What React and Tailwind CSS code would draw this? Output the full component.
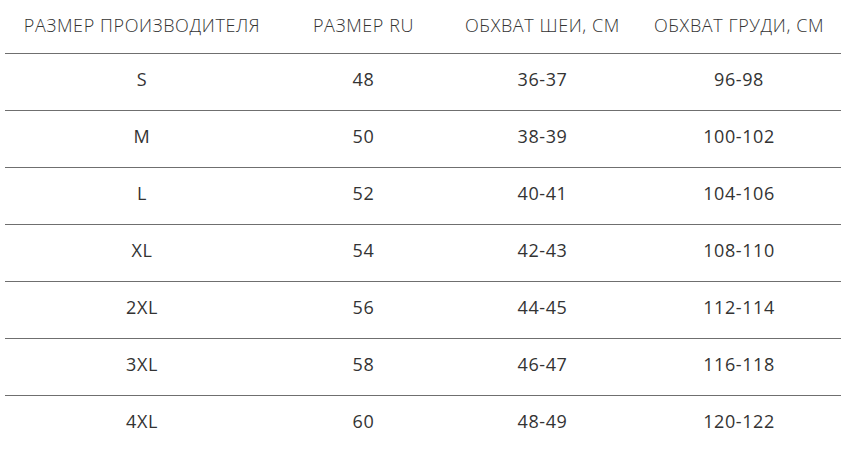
import React from 'react';

const rows = [
  ['S', '48', '36-37', '96-98'],
  ['M', '50', '38-39', '100-102'],
  ['L', '52', '40-41', '104-106'],
  ['XL', '54', '42-43', '108-110'],
  ['2XL', '56', '44-45', '112-114'],
  ['3XL', '58', '46-47', '116-118'],
  ['4XL', '60', '48-49', '120-122'],
];

const App = () => {
  return (
    <div className="min-h-screen bg-white px-[5px]">
      <table className="w-[836px] table-fixed border-collapse text-[#333]">
        <colgroup>
          <col className="w-[274px]" />
          <col className="w-[169px]" />
          <col className="w-[189px]" />
          <col className="w-[204px]" />
        </colgroup>
        <thead>
          <tr className="h-[53px] border-b border-[#6f6f6f] font-['Open_Sans',sans-serif] text-[18px] tracking-[0.6px]">
            <th className="font-light pb-[1px]">РАЗМЕР ПРОИЗВОДИТЕЛЯ</th>
            <th className="font-light pb-[1px]">РАЗМЕР RU</th>
            <th className="font-light pb-[1px]">ОБХВАТ ШЕИ, СМ</th>
            <th className="font-light pb-[1px]">ОБХВАТ ГРУДИ, СМ</th>
          </tr>
        </thead>
        <tbody className="font-['Open_Sans',sans-serif] text-[18px] tracking-[0.6px]">
          {rows.map((r, i) => (
            <tr
              key={r[0]}
              className={i < rows.length - 1 ? 'h-[57px] border-b border-[#6f6f6f]' : 'h-[57px]'}
            >
              {r.map((c, j) => (
                <td key={j} className="text-center pb-[4px]">{c}</td>
              ))}
            </tr>
          ))}
        </tbody>
      </table>
    </div>
  );
};

export default App;
